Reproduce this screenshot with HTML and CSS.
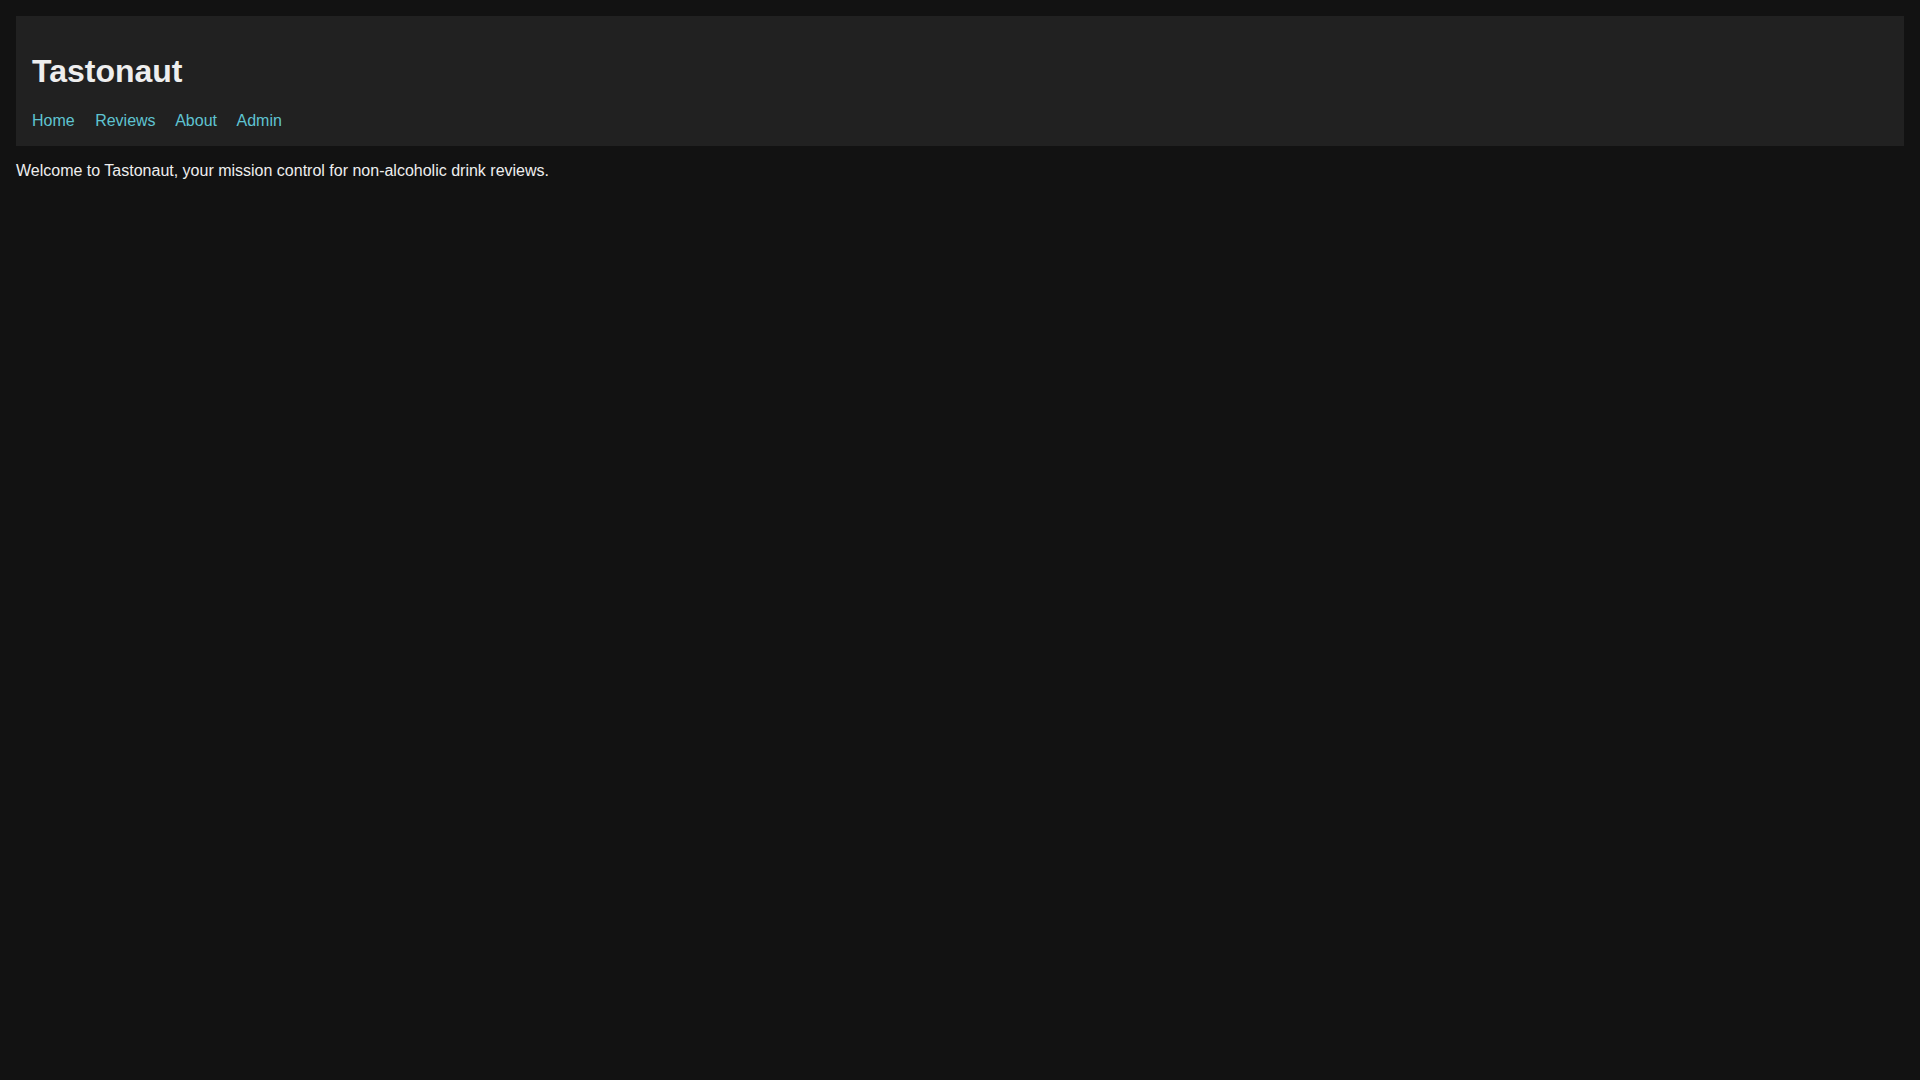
FILE: index.html
```html
<!DOCTYPE html>
<html lang="en">
<head>
<meta charset="utf-8">
<title>Tastonaut</title>
<link rel="stylesheet" href="styles.css">
</head>
<body>
<header class="site-header">
  <h1 class="site-title">Tastonaut</h1>
  <nav class="site-nav">
    <a href="#">Home</a>
    <a href="#">Reviews</a>
    <a href="#">About</a>
    <a href="#">Admin</a>
  </nav>
</header>
<main>
  <p class="intro">Welcome to Tastonaut, your mission control for non-alcoholic drink reviews.</p>
</main>
</body>
</html>
```
FILE: styles.css
```css
html, body {
  background: #121212;
}
body {
  margin: 0;
  padding: 16px;
  color: #eeeeee;
  font-family: "Liberation Sans", Arial, sans-serif;
  font-size: 16px;
}
.site-header {
  background: #212121;
  padding: 16px;
}
.site-title {
  font-size: 32px;
  font-weight: bold;
  margin: 21.44px 0;
  color: #eeeeee;
}
.site-nav a {
  color: #5fc4d1;
  text-decoration: none;
  margin-right: 16px;
}
.intro {
  margin: 16px 0;
}
```
